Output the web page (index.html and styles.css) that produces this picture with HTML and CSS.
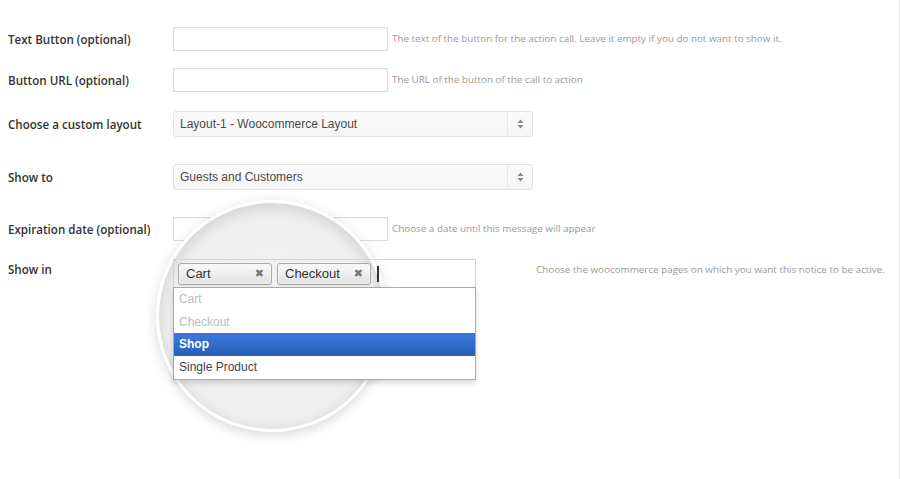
FILE: index.html
```html
<!DOCTYPE html>
<html lang="en">
    <head>
        <meta charset="UTF-8">
        <title>Notice settings</title>
        <link rel="stylesheet" href="styles.css">
    </head>

    <body>
        <div class="page">
            <div class="lens"></div>

            <div class="row gap-sm">
                <label class="row-label">Text Button (optional)</label>
                <input class="text-input" type="text">
                <span class="row-help">The text of the button for the action call. Leave it empty if you do not want to show it.</span>
            </div>

            <div class="row gap-md">
                <label class="row-label">Button URL (optional)</label>
                <input class="text-input" type="text">
                <span class="row-help">The URL of the button of the call to action</span>
            </div>

            <div class="row gap-lg">
                <label class="row-label">Choose a custom layout</label>
                <div class="chosen-single">
                    <span>Layout-1 - Woocommerce Layout</span>
                    <div class="chosen-arrow">
                        <svg width="7" height="10" viewBox="0 0 7 10"><path d="M3.5 0.5 L6.5 4 L0.5 4 Z M0.5 6 L6.5 6 L3.5 9.5 Z" fill="#888"/></svg>
                    </div>
                </div>
            </div>

            <div class="row gap-lg">
                <label class="row-label">Show to</label>
                <div class="chosen-single">
                    <span>Guests and Customers</span>
                    <div class="chosen-arrow">
                        <svg width="7" height="10" viewBox="0 0 7 10"><path d="M3.5 0.5 L6.5 4 L0.5 4 Z M0.5 6 L6.5 6 L3.5 9.5 Z" fill="#888"/></svg>
                    </div>
                </div>
            </div>

            <div class="row gap-md">
                <label class="row-label">Expiration date (optional)</label>
                <input class="text-input" type="text">
                <span class="row-help">Choose a date until this message will appear</span>
            </div>

            <div class="row row-top">
                <label class="row-label">Show in</label>
                <div class="field-wide">
                    <div class="chosen-multi">
                        <ul class="chosen-choices">
                            <li class="choice">Cart <span class="choice-close">&#10006;</span></li>
                            <li class="choice">Checkout <span class="choice-close">&#10006;</span></li>
                            <li class="caret"></li>
                        </ul>
                        <ul class="chosen-results">
                            <li class="result disabled">Cart</li>
                            <li class="result disabled">Checkout</li>
                            <li class="result highlighted">Shop</li>
                            <li class="result">Single Product</li>
                        </ul>
                    </div>
                </div>
                <span class="row-help">Choose the woocommerce pages on which you want this notice to be active.</span>
            </div>
        </div>
    </body>

</html>
```

FILE: styles.css
```css
* {
    margin: 0;
    padding: 0;
    box-sizing: border-box;
}

body {
    background: #fff;
    font-family: 'Open Sans', sans-serif;
    color: #333;
}

.page {
    position: relative;
    width: 900px;
    height: 479px;
    padding: 27px 0 0 8px;
    border-right: 1px solid #e6e6e6;
    overflow: hidden;
}

/* magnifier lens drawn over the expiration field */
.lens {
    position: absolute;
    left: 156px;
    top: 200px;
    width: 232px;
    height: 232px;
    border-radius: 50%;
    border: 3px solid #fff;
    background: radial-gradient(circle at 50% 45%, #f1f1f1 0%, #eeeeee 70%, #e6e6e6 100%);
    box-shadow: 0 3px 12px rgba(0, 0, 0, 0.16), inset 0 4px 14px rgba(0, 0, 0, 0.13);
    z-index: 2;
}

.row {
    display: flex;
    align-items: center;
}

.gap-sm {
    margin-bottom: 17px;
}

.gap-md {
    margin-bottom: 19px;
}

.gap-lg {
    margin-bottom: 27px;
}

.row-top {
    align-items: flex-start;
    position: relative;
    z-index: 3;
    margin-top: -1px;
}

.row-label {
    width: 165px;
    flex: none;
    font-size: 11.6px;
    font-weight: 600;
    color: #333;
}

.row-top .row-label {
    padding-top: 3px;
}

.row-help {
    margin-left: 4px;
    margin-bottom: 3px;
    font-size: 9.85px;
    color: #9a9a9a;
    white-space: nowrap;
}

.row-top .row-help {
    margin-left: 3px;
    padding-top: 3px;
}

.text-input {
    width: 215px;
    height: 24px;
    border: 1px solid #dcdcdc;
    background: #fff;
    box-shadow: inset 0 1px 2px rgba(0, 0, 0, 0.05);
    outline: none;
}

.chosen-single {
    width: 360px;
    height: 26px;
    display: flex;
    align-items: center;
    border: 1px solid #e2e2e2;
    border-radius: 3px;
    background: linear-gradient(#fbfbfb, #f5f5f5);
    font-family: 'Liberation Sans', Arial, sans-serif;
    font-size: 12px;
    color: #4a4a4a;

    & span {
        flex: 1;
        padding-left: 6px;
    }
}

.chosen-arrow {
    width: 25px;
    height: 100%;
    border-left: 1px solid #e8e8e8;
    display: flex;
    justify-content: center;
    align-items: center;
}

.field-wide {
    width: 360px;
    flex: none;
}

.chosen-multi {
    width: 303px;
    font-family: 'Liberation Sans', Arial, sans-serif;
    font-size: 12px;
}

.chosen-choices {
    list-style: none;
    height: 28px;
    border: 1px solid #d4d4d4;
    border-bottom: none;
    display: flex;
    align-items: center;
    padding-left: 4px;
    gap: 5px;

    & .choice {
        width: 94px;
        height: 22px;
        border: 1px solid #aaa;
        border-radius: 3px;
        background: linear-gradient(#f6f6f6 20%, #e6e6e6 80%);
        box-shadow: 0 0 2px #fff inset, 0 1px 0 rgba(0, 0, 0, 0.05);
        color: #333;
        font-size: 13px;
        padding: 0 7px;
        line-height: 19px;
        display: flex;
        justify-content: space-between;
    }

    & .choice-close {
        color: #777;
        font-size: 11px;
        line-height: 20px;
        font-family: 'DejaVu Sans', sans-serif;
    }

    & .caret {
        width: 2px;
        height: 16px;
        margin-left: 1px;
        background: #333;
    }
}

.chosen-results {
    list-style: none;
    background: #fff;
    border: 1px solid #aaa;
    padding: 0 0 1px;
    box-shadow: 0 3px 5px rgba(0, 0, 0, 0.15);

    & .result {
        height: 22.5px;
        line-height: 22px;
        padding-left: 5px;
        color: #444;
    }

    & .disabled {
        color: #bbb;
    }

    & .highlighted {
        background: linear-gradient(#3875d7 20%, #2a62bc 90%);
        color: #fff;
        font-weight: bold;
    }
}
```
